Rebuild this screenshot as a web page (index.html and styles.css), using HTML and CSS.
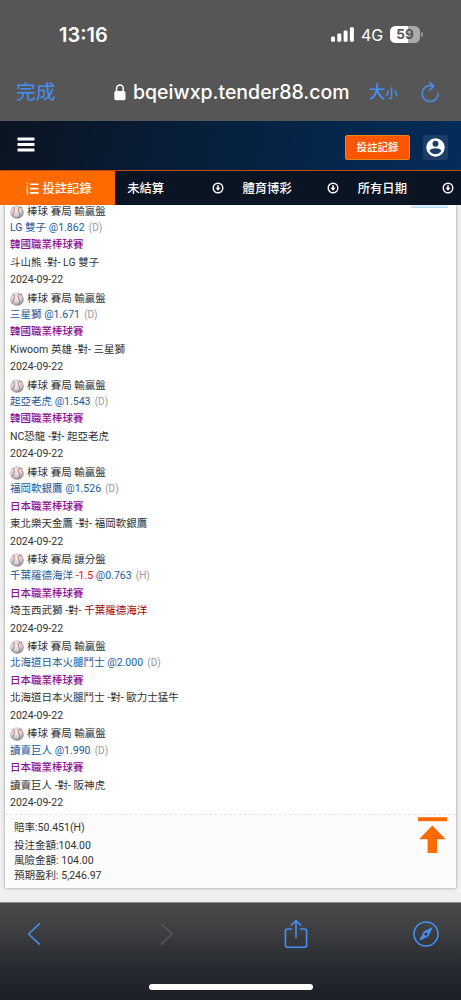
FILE: index.html
```html
<!DOCTYPE html>
<html lang="zh-Hant">
<head>
  <meta charset="UTF-8" />
  <meta name="viewport" content="width=device-width, initial-scale=1.0"/>
  <title>投註記錄</title>
  <link rel="stylesheet" href="styles.css">
</head>
<body>
  <svg class="sprite" width="0" height="0">
    <defs>
      <radialGradient id="ballShade" cx="45%" cy="38%" r="62%">
        <stop offset="0" stop-color="#f6f3f4"/>
        <stop offset="0.6" stop-color="#cfced5"/>
        <stop offset="1" stop-color="#85868f"/>
      </radialGradient>
    </defs>
    <symbol id="ball" viewBox="0 0 14 14">
      <circle cx="7" cy="7" r="6.8" fill="url(#ballShade)"/>
      <path d="M2.9 1.9C5 3.6 4.9 7 2.4 10.6M11.9 2.6C8.3 1.2 7.2 4.6 9 7.2c1.4 2.2.6 4.4-1 5.8" fill="none" stroke="#c9604f" stroke-width="0.9"/>
    </symbol>
    <symbol id="down" viewBox="0 0 12 12">
      <circle cx="6" cy="6" r="4.8" fill="none" stroke="#fff" stroke-width="1.4"/>
      <path d="M5.2 3.3h1.6v2.4h1.8L6 8.7 3.4 5.7h1.8z" fill="#fff"/>
    </symbol>
  </svg>

  <div class="browser-top">
    <div class="status">
      <span class="time">13:16</span>
      <svg class="signal" width="23" height="15" viewBox="0 0 23 15" fill="#fff">
        <rect x="0" y="9.5" width="4" height="5.2" rx="1.2"/>
        <rect x="6.3" y="6.6" width="4" height="8.1" rx="1.2"/>
        <rect x="12.6" y="3.6" width="4" height="11.1" rx="1.2"/>
        <rect x="18.9" y="0.3" width="4" height="14.4" rx="1.2"/>
      </svg>
      <span class="network">4G</span>
      <span class="battery">59</span>
      <span class="battery-tip"></span>
    </div>
    <div class="address">
      <span class="done">完成</span>
      <svg class="lock" width="12" height="17" viewBox="0 0 12 17">
        <rect x="0.3" y="7" width="11.2" height="9.2" rx="1.6" fill="#fff"/>
        <path d="M2.6 8V4.6a3.3 3.5 0 0 1 6.6 0V8" fill="none" stroke="#fff" stroke-width="1.5"/>
      </svg>
      <span class="url">bqeiwxp.tender88.com</span>
      <span class="text-size">大<small>小</small></span>
      <svg class="reload" width="19" height="22" viewBox="0 0 19 22" fill="none" stroke="#468ff7" stroke-width="1.5" stroke-linecap="round" stroke-linejoin="round">
        <path d="M17.2 12.6A8 8 0 1 1 12.6 5.3M8.6 1.3l4 4-4 4"/>
      </svg>
    </div>
  </div>

  <header class="site-header">
    <svg class="menu" width="18" height="15" viewBox="0 0 18 15" fill="#fff">
      <rect x="0.5" y="0.5" width="17" height="3" rx="0.6"/>
      <rect x="0.5" y="6" width="17" height="3" rx="0.6"/>
      <rect x="0.5" y="11.5" width="17" height="3" rx="0.6"/>
    </svg>
    <button class="record-btn">投註記錄</button>
    <span class="user">
      <svg width="19" height="19" viewBox="0 0 19 19">
        <circle cx="9.5" cy="9.5" r="9.2" fill="#fff"/>
        <circle cx="9.5" cy="5.8" r="3" fill="#1b3e69"/>
        <path d="M3.7 12.7c1.5-3.2 10.1-3.2 11.6 0C13.3 17.2 5.7 17.2 3.7 12.7z" fill="#1b3e69"/>
      </svg>
    </span>
  </header>

  <nav class="filters">
    <span class="tab active">
      <svg width="13" height="13" viewBox="0 0 13 13" fill="#fff">
        <path d="M4 1.4h8.6v1.7H4zM4 5.7h8.6v1.7H4zM4 10h8.6v1.7H4z"/>
        <path d="M.4 1.1L1.5.5v3.2M.3 5h1.5v1.2L.3 7.9h1.8M.3 9.2h1.6v3H.3M.7 10.7h1.2" fill="none" stroke="#fff" stroke-width="0.7"/>
      </svg>
      投註記錄
    </span>
    <span class="tab">未結算<svg width="12" height="12"><use href="#down"/></svg></span>
    <span class="tab">體育博彩<svg width="12" height="12"><use href="#down"/></svg></span>
    <span class="tab">所有日期<svg width="12" height="12"><use href="#down"/></svg></span>
  </nav>

  <main class="content">
    <div class="card">
      <span class="chip"></span>
      <div class="bets">
        <div class="bet">
          <p class="kind"><svg width="14" height="14"><use href="#ball"/></svg>棒球 賽局 輸贏盤</p>
          <p class="odds">LG 雙子 @1.862 <i>(D)</i></p>
          <p class="league">韓國職業棒球賽</p>
          <p>斗山熊 -對- LG 雙子</p>
          <p>2024-09-22</p>
        </div>
        <div class="bet">
          <p class="kind"><svg width="14" height="14"><use href="#ball"/></svg>棒球 賽局 輸贏盤</p>
          <p class="odds">三星獅 @1.671 <i>(D)</i></p>
          <p class="league">韓國職業棒球賽</p>
          <p>Kiwoom 英雄 -對- 三星獅</p>
          <p>2024-09-22</p>
        </div>
        <div class="bet">
          <p class="kind"><svg width="14" height="14"><use href="#ball"/></svg>棒球 賽局 輸贏盤</p>
          <p class="odds">起亞老虎 @1.543 <i>(D)</i></p>
          <p class="league">韓國職業棒球賽</p>
          <p>NC恐龍 -對- 起亞老虎</p>
          <p>2024-09-22</p>
        </div>
        <div class="bet">
          <p class="kind"><svg width="14" height="14"><use href="#ball"/></svg>棒球 賽局 輸贏盤</p>
          <p class="odds">福岡軟銀鷹 @1.526 <i>(D)</i></p>
          <p class="league">日本職業棒球賽</p>
          <p>東北樂天金鷹 -對- 福岡軟銀鷹</p>
          <p>2024-09-22</p>
        </div>
        <div class="bet">
          <p class="kind"><svg width="14" height="14"><use href="#ball"/></svg>棒球 賽局 讓分盤</p>
          <p class="odds">千葉羅德海洋 <b>-1.5</b> @0.763 <i>(H)</i></p>
          <p class="league">日本職業棒球賽</p>
          <p>埼玉西武獅 -對- <span class="handicap">千葉羅德海洋</span></p>
          <p>2024-09-22</p>
        </div>
        <div class="bet">
          <p class="kind"><svg width="14" height="14"><use href="#ball"/></svg>棒球 賽局 輸贏盤</p>
          <p class="odds">北海道日本火腿鬥士 @2.000 <i>(D)</i></p>
          <p class="league">日本職業棒球賽</p>
          <p>北海道日本火腿鬥士 -對- 歐力士猛牛</p>
          <p>2024-09-22</p>
        </div>
        <div class="bet">
          <p class="kind"><svg width="14" height="14"><use href="#ball"/></svg>棒球 賽局 輸贏盤</p>
          <p class="odds">讀賣巨人 @1.990 <i>(D)</i></p>
          <p class="league">日本職業棒球賽</p>
          <p>讀賣巨人 -對- 阪神虎</p>
          <p>2024-09-22</p>
        </div>
      </div>
      <div class="summary">
        <div class="totals">
          <p class="tall">賠率:50.451(H)</p>
          <p class="tall">投注金額:104.00</p>
          <p>風險金額: 104.00</p>
          <p>預期盈利: 5,246.97</p>
        </div>
        <svg class="to-top" width="29" height="37" viewBox="0 0 29 37" fill="#ff6a00">
          <rect x="0" y="0.2" width="29" height="4"/>
          <path d="M14.3 8.5L27.7 22.3H19V36H9.6V22.3H1z"/>
        </svg>
      </div>
    </div>
  </main>

  <footer class="browser-bottom">
    <div class="tools">
      <svg class="back" width="14" height="24" viewBox="0 0 14 24"><path d="M12.3 1.8L1.6 12l10.7 10.2"/></svg>
      <svg class="forward" width="14" height="24" viewBox="0 0 14 24"><path d="M1.3 1.8L12 12 1.3 22.2"/></svg>
      <svg class="share" width="24" height="30" viewBox="0 0 24 30"><path d="M7.6 10H3.9a2.5 2.5 0 0 0-2.5 2.5v13.2a2.5 2.5 0 0 0 2.5 2.5h16.2a2.5 2.5 0 0 0 2.5-2.5V12.5a2.5 2.5 0 0 0-2.5-2.5h-3.7M12 18.6V1.8M7.3 6.2L12 1.5l4.7 4.7"/></svg>
      <svg class="compass" width="26" height="26" viewBox="0 0 26 26">
        <circle cx="13" cy="13" r="12"/>
        <path d="M19 7l-4 8-8 4 4-8z" fill="#468ff7"/>
        <circle cx="13" cy="13" r="1.6" fill="#303235" stroke="none"/>
      </svg>
    </div>
    <div class="home-bar"></div>
  </footer>
</body>
</html>
```

FILE: styles.css
```css
* {
  box-sizing: border-box;
}
body {
  margin: 0;
  width: 461px;
  height: 1000px;
  overflow: hidden;
  display: flex;
  flex-direction: column;
  font-family: Roboto, "Noto Sans CJK TC", sans-serif;
  background: #f0f0f0;
  color: #333;
}
p {
  margin: 0;
}
svg {
  flex: none;
  display: block;
}
.sprite {
  position: absolute;
}

/* browser chrome */
.browser-top {
  height: 121px;
  flex: none;
  background: #565656;
  color: #fff;
  font-family: Inter, "Noto Sans CJK TC", sans-serif;
}
.status {
  display: flex;
  align-items: center;
  height: 69px;
  padding: 0 38px 0 59px;
}
.time {
  flex: 1;
  font-size: 20px;
  font-weight: 600;
}
.network {
  width: 28px;
  margin-left: 7px;
  font-size: 16px;
}
.battery {
  width: 30px;
  height: 17px;
  margin-left: 1px;
  border-radius: 5.5px;
  background: linear-gradient(90deg, #fff 59%, #aaa 59%);
  color: #565656;
  font-size: 13.5px;
  font-weight: 700;
  line-height: 17px;
  text-align: center;
}
.battery-tip {
  width: 2px;
  height: 5px;
  margin-left: 1px;
  border-radius: 0 2px 2px 0;
  background: #999;
}
.address {
  display: flex;
  align-items: center;
  height: 46px;
  padding-left: 16px;
}
.done {
  width: 98px;
  margin-top: -3px;
  font-size: 19.8px;
  color: #468ff7;
}
.url {
  width: 236px;
  margin-left: 7px;
  font-size: 19.5px;
  font-weight: 500;
  white-space: nowrap;
}
.text-size {
  width: 52px;
  margin-top: -2px;
  color: #468ff7;
  font-size: 16.5px;
  font-weight: 500;
  white-space: nowrap;
}
.text-size small {
  font-size: 12.5px;
}

/* site header */
.site-header {
  height: 50px;
  flex: none;
  display: flex;
  align-items: center;
  padding: 0 13px 0 17px;
  background: linear-gradient(100deg, #0b1422 0%, #06213f 50%, #042d5a 100%);
  border-bottom: 1px solid #c44a0e;
}
.menu {
  margin-top: -2px;
}
.record-btn {
  width: 65px;
  height: 25px;
  margin: 3px 13px 0 auto;
  padding: 0 0 1px;
  border: 1px solid #e58a1a;
  border-radius: 2px;
  background: #ff5500;
  color: #fff;
  font: 500 10.5px Roboto, "Noto Sans CJK TC", sans-serif;
}
.user {
  width: 25px;
  height: 25px;
  margin-top: 3px;
  display: flex;
  align-items: center;
  justify-content: center;
  border-radius: 2px;
  background: #1b3e69;
}
.filters {
  position: relative;
  z-index: 1;
  height: 34.4px;
  flex: none;
  display: grid;
  grid-template-columns: repeat(4, 1fr);
  background: #0b1422;
  color: #fff;
  font-size: 12.3px;
  font-weight: 500;
}
.tab {
  display: flex;
  align-items: center;
  justify-content: space-between;
  padding: 0 7px 0 12px;
}
.tab.active {
  justify-content: center;
  gap: 4px;
  padding: 0 0 0 2px;
  background: #ff6a00;
}

/* bet slip */
.content {
  flex: 1;
  min-height: 0;
  padding: 0 5px;
}
.card {
  position: relative;
  height: 682.6px;
  background: #fff;
  box-shadow: 0 0 3px rgba(0, 0, 0, 0.4);
}
.chip {
  position: absolute;
  top: 0;
  right: 8px;
  width: 37px;
  height: 3px;
  background: #dceffc;
  border-bottom: 1px solid #b4dcf8;
}
.bets {
  display: flow-root;
  height: 610px;
  padding-left: 5px;
  border-bottom: 1px dashed #e2e4f4;
  font-size: 10.52px;
}
.bet {
  height: 87.17px;
}
.bet:first-child {
  margin-top: -3.9px;
}
.bet p {
  height: 17.5px;
  line-height: 17.5px;
  white-space: nowrap;
}
.bet .kind {
  display: flex;
  gap: 3px;
  height: 17.17px;
  padding-top: 2px;
  line-height: 16px;
}
.kind svg {
  margin-top: 1px;
}
.odds {
  color: #19599b;
}
.odds i {
  margin-left: 1.5px;
  font-size: 10px;
  font-style: normal;
  color: #999;
}
.odds b {
  font-weight: 400;
  color: #f00;
}
.bet .league {
  color: #8d0f92;
  font-weight: 500;
}
.handicap {
  color: #990000;
}
.summary {
  display: flex;
  justify-content: space-between;
  height: 72.6px;
  padding: 4px 9px 0;
  background: #fcfcfc;
  font-size: 10.52px;
}
.totals p {
  height: 14.3px;
  line-height: 14.3px;
}
.totals .tall {
  height: 17.5px;
  line-height: 17.5px;
}
.to-top {
  margin-top: -2px;
}

.browser-bottom {
  height: 98px;
  flex: none;
  border-top: 1px solid #8b8b8b;
  background: linear-gradient(#4a4a4a 0%, #3c3e40 30%, #25282e 68%, #1d2027 100%);
}
.tools {
  display: flex;
  align-items: center;
  height: 61px;
  padding: 0 22px 0 27px;
}
.tools svg {
  fill: none;
  stroke: #468ff7;
  stroke-width: 1.6;
  stroke-linecap: round;
  stroke-linejoin: round;
}
.tools .forward {
  margin-left: 119px;
  stroke: #56575a;
}
.tools .share {
  margin: 0 0 0 110px;
}
.tools .compass {
  margin: 1px 0 0 auto;
}
.tools .compass path {
  stroke-width: 1;
}
.home-bar {
  width: 164px;
  height: 6px;
  margin: 20px auto 0;
  border-radius: 3px;
  background: #fff;
}
```
